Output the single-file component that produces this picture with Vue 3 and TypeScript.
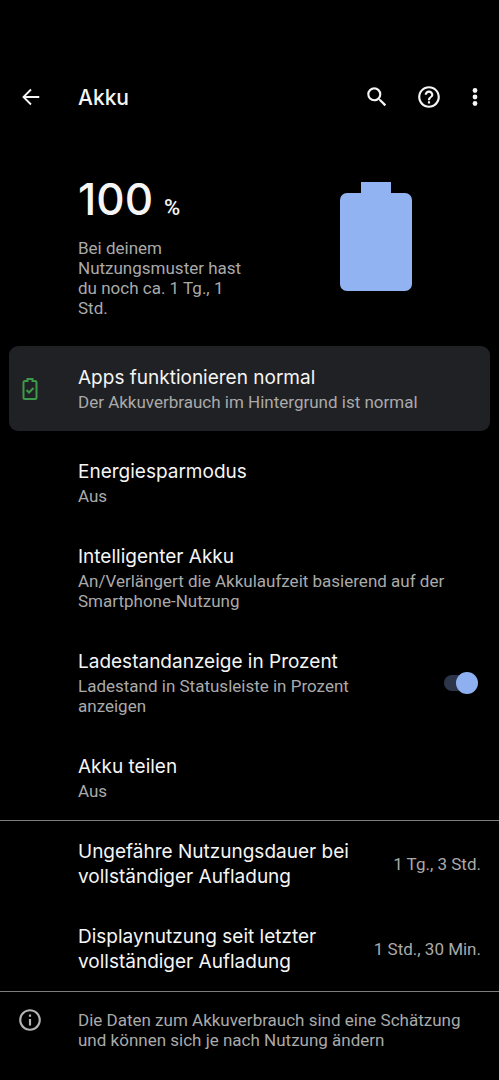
<script setup lang="ts">
import { ref } from 'vue'

interface Setting {
  id: string
  title: string
  summary: string
}

interface Stat {
  title: string
  value: string
}

const status: Setting = {
  id: 'status',
  title: 'Apps funktionieren normal',
  summary: 'Der Akkuverbrauch im Hintergrund ist normal',
}

const modes: Setting[] = [
  { id: 'saver', title: 'Energiesparmodus', summary: 'Aus' },
  {
    id: 'adaptive',
    title: 'Intelligenter Akku',
    summary: 'An/Verlängert die Akkulaufzeit basierend auf der Smartphone-Nutzung',
  },
]

const stats: Stat[] = [
  { title: 'Ungefähre Nutzungsdauer bei vollständiger Aufladung', value: '1 Tg., 3 Std.' },
  { title: 'Displaynutzung seit letzter vollständiger Aufladung', value: '1 Std., 30 Min.' },
]

const showPercent = ref(true)
</script>

<template>
  <div class="screen">
    <header class="bar">
      <button class="icon-btn" type="button" aria-label="Zurück">
        <svg class="icon" viewBox="0 0 24 24">
          <path d="M21 12H4.500M12 3.800L3.800 12l8.200 8.200" fill="none" stroke="currentColor" stroke-width="2" />
        </svg>
      </button>
      <h1 class="bar-title">Akku</h1>
      <button class="icon-btn" type="button" aria-label="Suchen">
        <svg class="icon large" viewBox="0 0 24 24">
          <path
            fill="currentColor"
            d="M15.500 14h-.79l-.28-.27A6.471 6.471 0 0 0 16 9.500 6.500 6.500 0 1 0 9.500 16c1.610 0 3.090-.59 4.230-1.570l.27.28v.79l5 4.990L20.490 19l-4.990-5zm-6 0C7.010 14 5 11.990 5 9.500S7.010 5 9.500 5 14 7.010 14 9.500 11.990 14 9.500 14z"
          />
        </svg>
      </button>
      <button class="icon-btn" type="button" aria-label="Hilfe">
        <svg class="icon large" viewBox="0 0 24 24">
          <path
            fill="currentColor"
            d="M11 18h2v-2h-2v2zm1-16C6.480 2 2 6.480 2 12s4.480 10 10 10 10-4.480 10-10S17.520 2 12 2zm0 18c-4.410 0-8-3.590-8-8s3.590-8 8-8 8 3.590 8 8-3.590 8-8 8zm0-14c-2.210 0-4 1.790-4 4h2c0-1.100.9-2 2-2s2 .9 2 2c0 2-3 1.750-3 5h2c0-2.250 3-2.500 3-5 0-2.210-1.790-4-4-4z"
          />
        </svg>
      </button>
      <button class="icon-btn menu" type="button" aria-label="Weitere Optionen">
        <svg class="icon large" viewBox="0 0 24 24">
          <g fill="currentColor">
            <circle cx="12" cy="6" r="2.200" />
            <circle cx="12" cy="12" r="2.200" />
            <circle cx="12" cy="18" r="2.200" />
          </g>
        </svg>
      </button>
    </header>

    <main>
      <section class="hero">
        <div class="hero-text">
          <p class="level">100<span class="unit">%</span></p>
          <p class="summary">Bei deinem Nutzungsmuster hast du noch ca. 1 Tg., 1 Std.</p>
        </div>
        <svg class="battery" viewBox="0 0 72 109" aria-hidden="true">
          <path
            fill="#92b3f2"
            d="M21 0h30v11h14a7 7 0 0 1 7 7v84a7 7 0 0 1-7 7H7a7 7 0 0 1-7-7V18a7 7 0 0 1 7-7h14z"
          />
        </svg>
      </section>

      <button class="row card" type="button">
        <svg class="lead good" viewBox="0 0 24 24" fill="none" stroke="currentColor" stroke-width="2">
          <path
            d="M9.500 2h5v2h2.500a1.500 1.500 0 0 1 1.500 1.500v15a1.500 1.500 0 0 1-1.500 1.500H7a1.500 1.500 0 0 1-1.500-1.500v-15A1.500 1.500 0 0 1 7 4h2.500z"
          />
          <path d="M8.500 13l2.500 2.500 4.500-4.500" />
        </svg>
        <span class="text">
          <span class="title">{{ status.title }}</span>
          <span class="summary">{{ status.summary }}</span>
        </span>
      </button>

      <button v-for="m in modes" :key="m.id" class="row" type="button">
        <span class="text">
          <span class="title">{{ m.title }}</span>
          <span class="summary">{{ m.summary }}</span>
        </span>
      </button>

      <label class="row with-switch">
        <span class="text">
          <span class="title">Ladestandanzeige in Prozent</span>
          <span class="summary">Ladestand in Statusleiste in Prozent anzeigen</span>
        </span>
        <input v-model="showPercent" class="switch" type="checkbox" role="switch" />
      </label>

      <button class="row" type="button">
        <span class="text">
          <span class="title">Akku teilen</span>
          <span class="summary">Aus</span>
        </span>
      </button>

      <section class="stats">
        <div v-for="s in stats" :key="s.title" class="row stat">
          <span class="title">{{ s.title }}</span>
          <span class="value">{{ s.value }}</span>
        </div>
      </section>
    </main>

    <footer class="row note">
      <svg class="lead" viewBox="0 0 24 24">
        <path
          fill="currentColor"
          d="M11 7h2v2h-2zm0 4h2v6h-2zm1-9C6.480 2 2 6.480 2 12s4.480 10 10 10 10-4.480 10-10S17.520 2 12 2zm0 18c-4.410 0-8-3.590-8-8s3.590-8 8-8 8 3.590 8 8-3.590 8-8 8z"
        />
      </svg>
      <p class="summary">Die Daten zum Akkuverbrauch sind eine Schätzung und können sich je nach Nutzung ändern</p>
    </footer>
  </div>
</template>

<style>
body {
  margin: 0;
  background: #000;
}
</style>

<style scoped>
.screen {
  box-sizing: border-box;
  min-height: 100vh;
  padding-top: 72px;
  background: #000;
  color: #f5f5f5;
  font-family: Roboto, "Liberation Sans", sans-serif;
  font-size: 17px;
}

p,
h1 {
  margin: 0;
}

button {
  border: 0;
  background: none;
  color: inherit;
  font: inherit;
  text-align: left;
  cursor: pointer;
}

.bar {
  display: flex;
  align-items: center;
  height: 50px;
  padding: 0 10px 0 11px;
}

.bar-title {
  flex: 1;
  padding: 2px 0 0 27px;
  font-family: Inter, Roboto, sans-serif;
  font-size: 21px;
  font-weight: 500;
  line-height: 28px;
}

.icon-btn {
  display: flex;
  align-items: center;
  justify-content: center;
  width: 40px;
  height: 40px;
  padding: 0;
}

.icon-btn + .icon-btn {
  margin-left: 12px;
}

.icon-btn.menu {
  width: 28px;
}

.icon {
  width: 22px;
  height: 22px;
}

.icon.large {
  width: 26px;
  height: 26px;
}

.hero {
  display: flex;
  align-items: flex-start;
  justify-content: space-between;
  padding: 53px 87px 28px 78px;
}

.hero-text {
  width: 172px;
}

.level {
  display: flex;
  align-items: baseline;
  gap: 11px;
  margin-bottom: 6px;
  font-family: Inter, Roboto, sans-serif;
  font-size: 44px;
  font-weight: 500;
  line-height: 48px;
}

.unit {
  font-family: Roboto, sans-serif;
  font-size: 22px;
}

.battery {
  width: 72px;
  height: 109px;
  margin-top: 7px;
}

.row {
  box-sizing: border-box;
  display: flex;
  align-items: center;
  width: 100%;
  padding: 19px 18px 19px 78px;
}

.text {
  display: flex;
  flex: 1;
  flex-direction: column;
  gap: 2px;
}

.title {
  color: #f5f5f5;
  font-family: Inter, Roboto, sans-serif;
  font-size: 19px;
  line-height: 25px;
}

.summary {
  color: #aaa;
  font-size: 17px;
  line-height: 20px;
}

.lead {
  flex: none;
  width: 26px;
  height: 26px;
  color: #b4b4b4;
}

.card {
  width: auto;
  min-width: calc(100% - 18px);
  margin: 0 9px 9px;
  padding-left: 9px;
  border-radius: 9px;
  background: #202124;
}

.lead.good {
  width: 24px;
  height: 24px;
  margin-right: 36px;
  color: #3d9a4a;
}

.with-switch {
  gap: 60px;
  padding-right: 21px;
  cursor: pointer;
}

.switch {
  position: relative;
  flex: none;
  appearance: none;
  width: 36px;
  height: 22px;
  margin: 0;
  cursor: pointer;
}

.switch::before {
  content: "";
  position: absolute;
  inset: 3px 2px;
  border-radius: 8px;
  background: #2c3549;
}

.switch::after {
  content: "";
  position: absolute;
  top: 0;
  left: 0;
  width: 22px;
  height: 22px;
  border-radius: 50%;
  background: #bdbdbd;
}

.switch:checked::after {
  left: auto;
  right: 0;
  background: #8fb0f0;
}

.stats {
  border-top: 1px solid #7d7d7d;
  border-bottom: 1px solid #7d7d7d;
}

.stat {
  justify-content: space-between;
  gap: 24px;
  padding-top: 18px;
  padding-bottom: 17px;
}

.value {
  flex: none;
  color: #aaa;
  font-size: 17px;
  line-height: 20px;
}

.note {
  padding-top: 15px;
  padding-left: 17px;
  align-items: flex-start;
}

.note .lead {
  margin-right: 35px;
}

.note .summary {
  padding-top: 3px;
}
</style>
